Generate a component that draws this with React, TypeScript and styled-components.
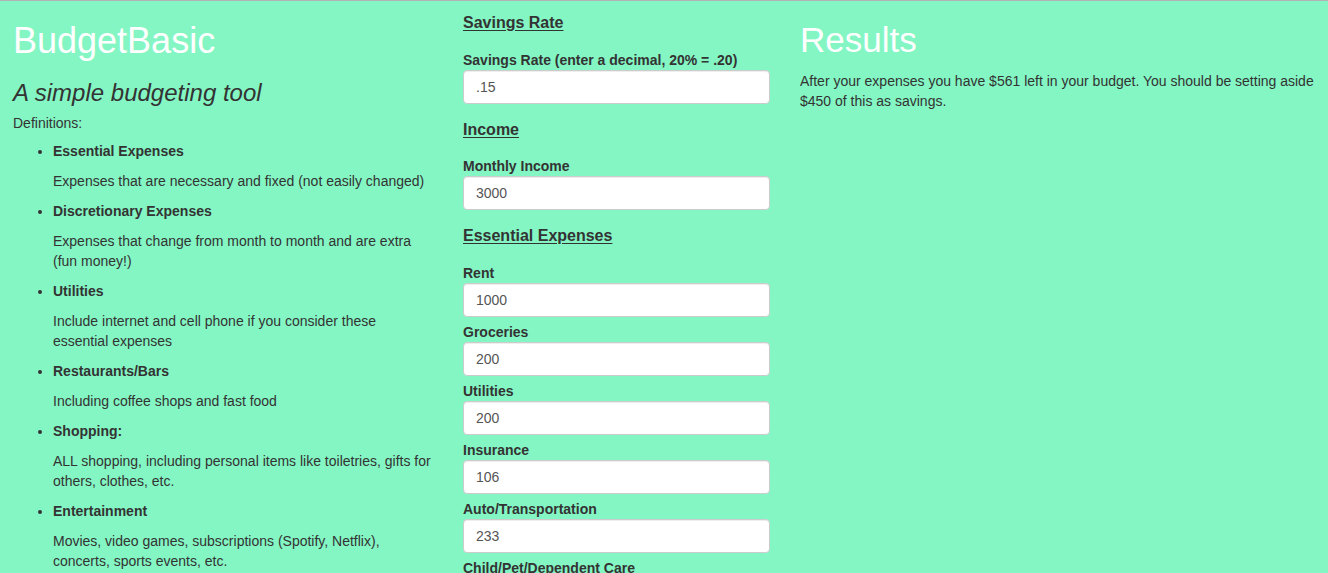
import React from "react";
import styled, { createGlobalStyle } from "styled-components";

const GlobalStyle = createGlobalStyle`
  html, body {
    margin: 0;
    padding: 0;
    overflow: hidden;
    background: #84f6c4;
  }
  body {
    font-family: "Liberation Sans", Helvetica, Arial, sans-serif;
    font-size: 14px;
    line-height: 20px;
    color: #333;
  }
  * { box-sizing: border-box; }
`;

const Page = styled.div`
  border-top: 1px solid #b3b3b3;
  display: grid;
  grid-template-columns: 420px 307px 1fr;
  column-gap: 30px;
  align-items: start;
  padding: 0 8px 0 13px;
  min-height: 573px;
`;

const Column = styled.div<{ $top?: number }>`
  display: flex;
  flex-direction: column;
  padding-top: ${(p) => p.$top ?? 0}px;
  min-width: 0;
`;

const Title = styled.h1<{ $size: number; $mb?: number }>`
  margin: 20px 0 ${(p) => p.$mb ?? 10}px;
  font-size: ${(p) => p.$size}px;
  font-weight: 400;
  line-height: 1.1;
  color: #fff;
`;

const Tagline = styled.h3`
  margin: 9px 0 7px;
  font-size: 24px;
  font-style: italic;
  font-weight: 400;
  line-height: 1.1;
  color: #333;
`;

const Intro = styled.div`
  margin-bottom: 8px;
`;

const DefList = styled.ul`
  margin: 0;
  padding-left: 40px;
`;

const DefItem = styled.li`
  list-style: disc;
`;

const DefTerm = styled.p`
  margin: 0 0 10px;
  font-weight: 700;
`;

const DefText = styled.p`
  margin: 0 0 10px;
`;

const SectionTitle = styled.h4`
  margin: 12px 0 18px;
  font-size: 16px;
  font-weight: 700;
  line-height: 1.1;
  text-decoration: underline;
  text-underline-offset: 2px;
  color: #333;
`;

const Field = styled.div`
  display: flex;
  flex-direction: column;
  margin-bottom: 5px;
`;

const Label = styled.label`
  display: block;
  font-weight: 700;
  line-height: 20px;
  margin: 0;
`;

const Input = styled.input`
  display: block;
  width: 100%;
  height: 34px;
  padding: 6px 12px;
  font-family: inherit;
  font-size: 14px;
  line-height: 20px;
  color: #555;
  background: #fff;
  border: 1px solid #ccc;
  border-radius: 4px;
  box-shadow: inset 0 1px 1px rgba(0, 0, 0, 0.075);
  outline: none;
`;

const ResultText = styled.p`
  margin: 0;
`;

const definitions: [string, string][] = [
  ["Essential Expenses", "Expenses that are necessary and fixed (not easily changed)"],
  ["Discretionary Expenses", "Expenses that change from month to month and are extra (fun money!)"],
  ["Utilities", "Include internet and cell phone if you consider these essential expenses"],
  ["Restaurants/Bars", "Including coffee shops and fast food"],
  ["Shopping:", "ALL shopping, including personal items like toiletries, gifts for others, clothes, etc."],
  ["Entertainment", "Movies, video games, subscriptions (Spotify, Netflix), concerts, sports events, etc."],
];

type Section = { title: string; fields: [string, string][] };

const sections: Section[] = [
  { title: "Savings Rate", fields: [["Savings Rate (enter a decimal, 20% = .20)", ".15"]] },
  { title: "Income", fields: [["Monthly Income", "3000"]] },
  {
    title: "Essential Expenses",
    fields: [
      ["Rent", "1000"],
      ["Groceries", "200"],
      ["Utilities", "200"],
      ["Insurance", "106"],
      ["Auto/Transportation", "233"],
      ["Child/Pet/Dependent Care", "0"],
    ],
  },
];

export default function App() {
  return (
    <>
      <GlobalStyle />
      <Page>
        <Column>
          <Title $size={36}>BudgetBasic</Title>
          <Tagline>A simple budgeting tool</Tagline>
          <Intro>Definitions:</Intro>
          <DefList>
            {definitions.map(([term, text]) => (
              <DefItem key={term}>
                <DefTerm>{term}</DefTerm>
                <DefText>{text}</DefText>
              </DefItem>
            ))}
          </DefList>
        </Column>
        <Column $top={1}>
          {sections.map((s) => (
            <React.Fragment key={s.title}>
              <SectionTitle>{s.title}</SectionTitle>
              {s.fields.map(([label, value]) => (
                <Field key={label}>
                  <Label>{label}</Label>
                  <Input type="text" defaultValue={value} />
                </Field>
              ))}
            </React.Fragment>
          ))}
        </Column>
        <Column>
          <Title $size={35} $mb={11}>Results</Title>
          <ResultText>
            After your expenses you have $561 left in your budget. You should be setting aside $450 of this as
            savings.
          </ResultText>
        </Column>
      </Page>
    </>
  );
}
